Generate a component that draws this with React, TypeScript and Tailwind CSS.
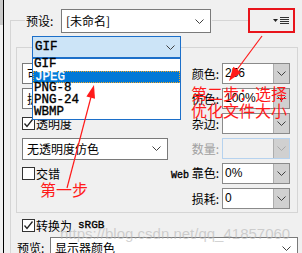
import React from 'react';

const cjk = "font-['Microsoft_YaHei','Noto_Sans_CJK_SC',sans-serif]";
const pix = "font-['Liberation_Mono',monospace] font-normal [-webkit-text-stroke:0.35px_currentColor]";

const Chevron = ({ color = '#404040' }: { color?: string }) => (
  <svg width="9" height="5" viewBox="0 0 9 5">
    <polyline points="0.5,0.5 4.5,4.5 8.5,0.5" fill="none" stroke={color} strokeWidth="1" />
  </svg>
);

const Check = ({ checked }: { checked?: boolean }) => (
  <div className="w-[13px] h-[13px] border border-[#333] bg-white flex items-center justify-center">
    {checked && (
      <svg width="11" height="11" viewBox="0 0 11 11">
        <polyline points="1.5,5.5 4,8.5 9.5,1.5" fill="none" stroke="#222" strokeWidth="1.3" />
      </svg>
    )}
  </div>
);

const Combo = ({ text, className }: { text: string; className: string }) => (
  <div className={`flex items-center justify-between border border-[#7a7a7a] bg-white pl-[4px] pr-[6px] ${className}`}>
    <span className={`${cjk} text-[12px] whitespace-nowrap`}>{text}</span>
    <Chevron />
  </div>
);

const Field = ({ value, disabled }: { value?: string; disabled?: boolean }) => (
  <div className={`flex h-[21px] w-[68px] border ${disabled ? 'border-[#b6d2ee]' : 'border-[#8a8a8a]'}`}>
    <div className={`flex-1 pl-[2px] text-[12px] leading-[19px] font-['Liberation_Sans',sans-serif] ${disabled ? 'bg-[#f0f0f0]' : 'bg-white'}`}>
      {value}
    </div>
    <div className="w-[16px] flex items-center justify-center bg-[#d0d0d0] border-l border-[#adadad]">
      <Chevron color={disabled ? '#a8a8a8' : '#404040'} />
    </div>
  </div>
);

const Label = ({ children, dim }: { children: React.ReactNode; dim?: boolean }) => (
  <div className={`w-[52px] pr-[1px] text-right text-[12px] whitespace-nowrap ${cjk} ${dim ? 'text-[#a0a0a0]' : 'text-black'}`}>
    {children}
  </div>
);

const formats = ['GIF', 'JPEG', 'PNG-8', 'PNG-24', 'WBMP'];

export default function App() {
  return (
    <div className="relative w-[302px] h-[253px] overflow-hidden bg-[#f0f0f0] flex text-black">
      <div className="w-[4px] flex flex-col border-r border-black">
        <div className="h-[25px] bg-[#c9c9c9]" />
      </div>

      <div className="flex-1 flex flex-col pl-[6px]">
        {/* preset row */}
        <div className="flex items-start mt-[9px] h-[24px]">
          <div className="w-[15px] h-[13px] mt-[11px] border-l border-t border-[#d5d5d5]" />
          <div className={`w-[36px] pl-[1px] h-[24px] leading-[24px] text-[12px] ${cjk}`}>预设:</div>
          <Combo text="[未命名]" className="w-[150px] h-[24px]" />
          <div className="w-[36px] h-px mt-[11px] ml-[1px] bg-[#d5d5d5]" />
          <div className="ml-[25px] mt-[8px] flex items-center gap-[2px]">
            <svg width="5" height="3" viewBox="0 0 5 3">
              <polygon points="0,0 5,0 2.5,3" fill="#222" />
            </svg>
            <div className="flex flex-col gap-[1px]">
              <div className="w-[9px] h-px bg-[#333]" />
              <div className="w-[9px] h-px bg-[#333]" />
              <div className="w-[9px] h-px bg-[#333]" />
              <div className="w-[9px] h-px bg-[#333]" />
            </div>
          </div>
        </div>

        {/* outer group */}
        <div className="flex-1 flex flex-col border-l border-[#d5d5d5] pl-[5px] pt-[3px]">
          <div className="mr-[4px] flex flex-col">
            <div className="flex items-start h-[22px]">
              <div className="w-[16px] h-[11px] mt-[11px] border-l border-t border-[#d5d5d5]" />
              <div className="w-[149px] h-[22px] flex items-center justify-between border border-[#1c6fc9] bg-[#cce4f7] pl-[2px] pr-[5px]">
                <span className={`${pix} text-[12.5px]`}>GIF</span>
                <Chevron />
              </div>
              <div className="flex-1 h-[11px] mt-[11px] border-t border-r border-[#d5d5d5]" />
            </div>

            <div className="flex flex-col gap-[4px] border-l border-r border-b border-[#d5d5d5] pt-[5px] pb-[3px] pl-[5px]">
              <div className="flex items-center h-[21px]">
                <Combo text="可选择" className="w-[146px] h-[21px]" />
                <Label>颜色:</Label>
                <div className="ml-[2px]"><Field value="256" /></div>
              </div>
              <div className="flex items-center h-[21px]">
                <Combo text="扩散" className="w-[146px] h-[21px]" />
                <Label>仿色:</Label>
                <div className="ml-[2px]"><Field value="100%" /></div>
              </div>
              <div className="flex items-center h-[21px]">
                <div className="w-[146px] flex items-center gap-[1px]">
                  <Check checked />
                  <span className={`${cjk} text-[12px]`}>透明度</span>
                </div>
                <Label>杂边:</Label>
                <div className="ml-[2px]"><Field /></div>
              </div>
              <div className="flex items-center h-[21px]">
                <Combo text="无透明度仿色" className="w-[146px] h-[22px]" />
                <Label dim>数量:</Label>
                <div className="ml-[2px]"><Field disabled /></div>
              </div>
              <div className="flex items-center h-[21px]">
                <div className="w-[146px] flex items-center gap-[1px]">
                  <Check />
                  <span className={`${cjk} text-[12px]`}>交错</span>
                </div>
                <Label>
                  <span className={`${pix} text-[10px]`}>Web</span> 靠色:
                </Label>
                <div className="ml-[2px]"><Field value="0%" /></div>
              </div>
              <div className="flex items-center h-[21px]">
                <div className="w-[146px]" />
                <Label>损耗:</Label>
                <div className="ml-[2px]"><Field value="0" /></div>
              </div>
            </div>
          </div>

          <div className="mt-[6px] pl-[6px] flex items-center gap-[1px] h-[13px]">
            <Check checked />
            <span className={`${cjk} text-[12px]`}>转换为</span>
            <span className={`${pix} text-[11px] ml-[5px]`}>sRGB</span>
          </div>

          <div className="mt-[5px] flex items-start mr-[4px]">
            <div className={`w-[34px] pl-[1px] h-[22px] leading-[22px] text-[12px] ${cjk}`}>预览:</div>
            <Combo text="显示器颜色" className="flex-1 h-[22px]" />
          </div>
        </div>
      </div>

      {/* open format list */}
      <div className="absolute left-[32px] top-[58px] w-[149px] border border-[#1c6fc9] bg-white flex flex-col">
        {formats.map((f) => (
          <div
            key={f}
            className={`h-[12px] leading-[11px] pl-[1px] ${pix} text-[12.5px] ${
              f === 'JPEG' ? 'bg-[#0078d7] text-white border border-dotted border-[#f5a623]' : 'text-black'
            }`}
          >
            {f}
          </div>
        ))}
      </div>

      {/* watermark */}
      <div className="absolute left-[60px] top-[223px] text-[15px] font-['Liberation_Sans',sans-serif] text-[#b5b5b5]/60 whitespace-nowrap">
        https://blog.csdn.net/qq_41857060
      </div>

      {/* annotations */}
      <div className="absolute left-[248px] top-[8px] w-[47px] h-[25px] border-2 border-[#e8141b]" />
      <div className={`absolute left-[191px] top-[85px] text-[16px] leading-[17px] text-[#ff1a1a] whitespace-nowrap ${cjk}`}>
        第二步：选择
        <br />
        优化文件大小
      </div>
      <div className={`absolute left-[40px] top-[181px] text-[16px] leading-[17px] text-[#ff1a1a] ${cjk}`}>第一步</div>
      <svg className="absolute left-0 top-0" width="302" height="253" viewBox="0 0 302 253">
        <line x1="262" y1="36" x2="236" y2="71" stroke="#ff1a1a" strokeWidth="1.2" />
        <polygon points="229,81 241.3,72.6 233.3,66.7" fill="#ff1a1a" />
        <line x1="67" y1="188" x2="91" y2="97" stroke="#ff1a1a" strokeWidth="1.2" />
        <polygon points="94,85 95,98.7 86.4,96.5" fill="#ff1a1a" />
      </svg>
    </div>
  );
}
